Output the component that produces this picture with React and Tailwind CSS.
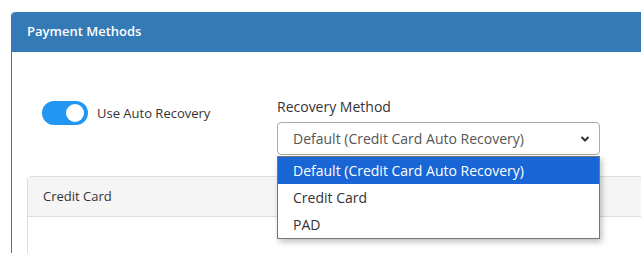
export default function App() {
  return (
    <div className="w-[641px] h-[253px] overflow-hidden bg-white relative" style={{ fontFamily: '"Open Sans", sans-serif' }}>
      <div className="ml-[11px] mt-[12px] w-[700px] h-[300px] rounded-tl-[4px] border-l border-[#337ab7]">
        <div className="h-[40px] bg-[#337ab7] rounded-tl-[4px] flex items-center pl-[15px] text-white text-[13px] font-semibold">
          Payment Methods
        </div>
        <div className="pl-[15px]">
          <div className="flex items-start pt-[45px] pl-[15px]">
            <div className="flex items-center w-[235px] pt-[4px]">
              <div className="w-[46px] h-[24px] rounded-full bg-[#2196f3] flex items-center justify-end pr-[4px]">
                <div className="w-[18px] h-[18px] rounded-full bg-white"></div>
              </div>
              <span className="ml-[9px] text-[13px] text-[#333] mt-[1px]">Use Auto Recovery</span>
            </div>
            <div className="relative">
              <div className="text-[14px] text-[#333] leading-[20px] mb-[5px]">Recovery Method</div>
              <div className="w-[323px] h-[33px] border border-[#aaa] rounded-[4px] flex items-center justify-between pl-[15px] pr-[9px] text-[14px] text-[#555]">
                <span>Default (Credit Card Auto Recovery)</span>
                <svg width="10" height="8" viewBox="0 0 10 8"><path d="M1.5 2 L5 5.5 L8.5 2" stroke="#333" strokeWidth="2" fill="none" /></svg>
              </div>
            </div>
          </div>
          <div className="mt-[21px] rounded-t-[4px] border border-[#ddd] h-[100px]">
            <div className="h-[40px] bg-[#f5f5f5] border-b border-[#ddd] flex items-center pl-[15px] text-[13px] text-[#333]">
              Credit Card
            </div>
          </div>
        </div>
      </div>
      <div className="absolute left-[277px] top-[156px] w-[323px] bg-white border border-[#767676] shadow-[2px_3px_6px_rgba(0,0,0,0.25)] text-[14px] text-[#333]">
        <div className="h-[27px] bg-[#1a65d6] text-white flex items-center pl-[15px]">Default (Credit Card Auto Recovery)</div>
        <div className="h-[27px] flex items-center pl-[15px]">Credit Card</div>
        <div className="h-[27px] flex items-center pl-[15px]">PAD</div>
      </div>
    </div>
  );
}
